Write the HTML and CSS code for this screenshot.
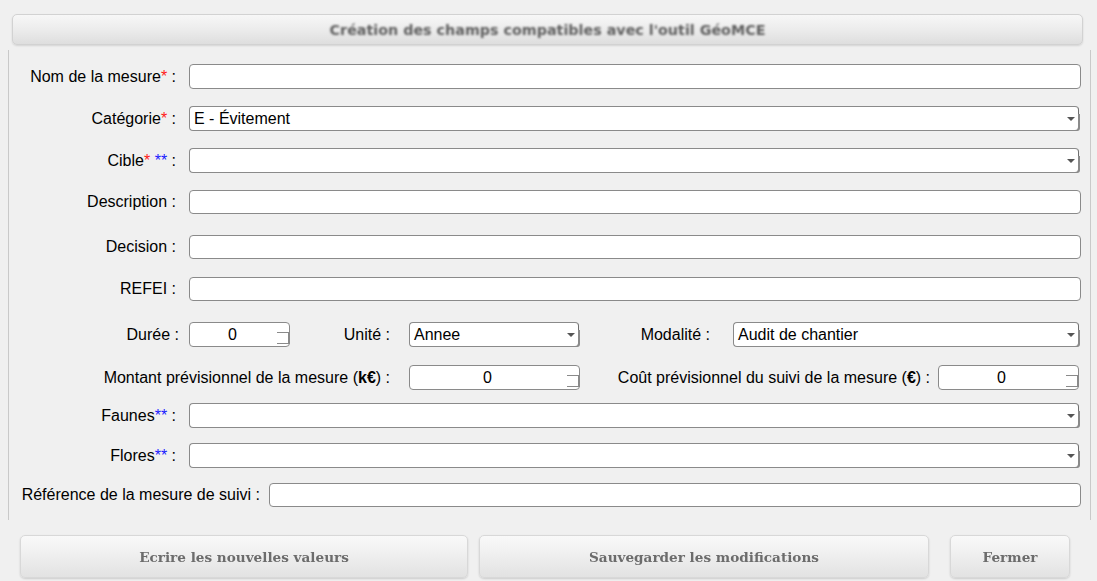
FILE: index.html
```html
<!DOCTYPE html>
<html lang="fr">
<head>
<meta charset="utf-8">
<title>GéoMCE</title>
<link rel="stylesheet" href="styles.css">
</head>
<body>
<div class="window">
  <div class="header">
    <div class="hbtn"><span>Création des champs compatibles avec l'outil GéoMCE</span></div>
  </div>
  <div class="panel">
    <div class="row r1">
      <label class="lbl w180 p13">Nom de la mesure<span class="req">*</span> :</label>
      <div class="field input"></div>
    </div>
    <div class="row r2">
      <label class="lbl w180 p13">Catégorie<span class="req">*</span> :</label>
      <div class="field combo"><span class="val">E - Évitement</span><span class="arrow"></span></div>
    </div>
    <div class="row r3">
      <label class="lbl w180 p13">Cible<span class="req">*</span> <span class="opt">**</span> :</label>
      <div class="field combo"><span class="val"></span><span class="arrow"></span></div>
    </div>
    <div class="row r4">
      <label class="lbl w180 p13">Description :</label>
      <div class="field input"></div>
    </div>
    <div class="row r5">
      <label class="lbl w180 p13">Decision :</label>
      <div class="field input"></div>
    </div>
    <div class="row r6">
      <label class="lbl w180 p13">REFEI :</label>
      <div class="field input"></div>
    </div>
    <div class="row r7">
      <label class="lbl w180 p11">Durée :</label>
      <div class="field spin s101"><span class="num">0</span><span class="steps"></span></div>
      <label class="lbl w119 p19">Unité :</label>
      <div class="field combo c170"><span class="val">Annee</span><span class="arrow"></span></div>
      <label class="lbl w154 p23">Modalité :</label>
      <div class="field combo grow"><span class="val">Audit de chantier</span><span class="arrow"></span></div>
    </div>
    <div class="row r8">
      <label class="lbl w400 p19">Montant prévisionnel de la mesure (<b>k€</b>) :</label>
      <div class="field spin s171"><span class="num">0</span><span class="steps"></span></div>
      <label class="lbl w358 p8">Coût prévisionnel du suivi de la mesure (<b>€</b>) :</label>
      <div class="field spin grow"><span class="num">0</span><span class="steps"></span></div>
    </div>
    <div class="row r9">
      <label class="lbl w180 p13">Faunes<span class="opt">**</span> :</label>
      <div class="field combo"><span class="val"></span><span class="arrow"></span></div>
    </div>
    <div class="row r10">
      <label class="lbl w180 p13">Flores<span class="opt">**</span> :</label>
      <div class="field combo"><span class="val"></span><span class="arrow"></span></div>
    </div>
    <div class="row r11">
      <label class="lbl w260 p9">Référence de la mesure de suivi :</label>
      <div class="field input"></div>
    </div>
  </div>
  <div class="footer">
    <div class="fbtn b1"><span>Ecrire les nouvelles valeurs</span></div>
    <div class="fbtn b2"><span>Sauvegarder les modifications</span></div>
    <div class="fbtn b3"><span>Fermer</span></div>
  </div>
</div>
</body>
</html>
```

FILE: styles.css
```css
* { box-sizing: border-box; }
html, body { margin: 0; padding: 0; }
body {
  background: #f0f0f0;
  font-family: "Liberation Sans", Arial, sans-serif;
  font-size: 16px;
  color: #000;
  width: 1097px;
  height: 581px;
  overflow: hidden;
}
.window { display: flex; flex-direction: column; height: 581px; }

.header { height: 50px; padding: 14px 14px 5px 12px; }
.hbtn {
  height: 31px;
  border: 1px solid #d2d2d2;
  border-radius: 5px;
  background: linear-gradient(#f7f7f7, #ececec 50%, #dedede);
  box-shadow: 0 1px 2px rgba(0,0,0,0.12);
  display: flex; align-items: center; justify-content: center;
}
.hbtn span {
  font-family: "DejaVu Sans", Verdana, sans-serif;
  font-weight: bold;
  font-size: 14.3px;
  color: #5e5e5e;
  filter: blur(0.8px);
}

.panel {
  margin-left: 8px;
  width: 1083px;
  height: 470px;
  border-left: 1px solid #c9c9c9;
  border-right: 1px solid #c9c9c9;
  padding: 14px 9px 0 0;
  display: grid;
  grid-template-rows: 42px 42px 42px 45px 42px 45px 43px 38px 40px 40px 25px;
}
.row { display: flex; align-items: center; height: 25px; }
.r4, .r5, .r6, .r11 { height: 24px; }

.lbl {
  flex: none;
  text-align: right;
  white-space: nowrap;
  line-height: 20px;
}
.lbl b { font-weight: bold; }
.req { color: #ff1a1a; }
.opt { color: #1a1aff; }
.w180 { width: 180px; }
.w119 { width: 119px; }
.w154 { width: 154px; }
.w400 { width: 400px; }
.w358 { width: 358px; }
.w260 { width: 260px; }
.p8 { padding-right: 8px; }
.p9 { padding-right: 9px; }
.p11 { padding-right: 10px; }
.p13 { padding-right: 13px; }
.p19 { padding-right: 19px; }
.p23 { padding-right: 23px; }

.field {
  position: relative;
  flex: 1;
  height: 100%;
  background: #fff;
  border: 1px solid #8a8a8a;
  border-radius: 4px;
  display: flex; align-items: center;
}
.combo { margin-right: 2px; border-right-color: #6e6e6e; }
.combo .val { padding-left: 4px; line-height: 20px; }
.combo .arrow {
  position: absolute;
  right: 3px; top: 50%;
  margin-top: -2px;
  width: 0; height: 0;
  border-left: 4px solid transparent;
  border-right: 4px solid transparent;
  border-top: 4px solid #555;
}
.combo::after {
  content: "";
  position: absolute;
  right: -2px; bottom: -1px;
  width: 14px; height: 16px;
  border-right: 2px solid #8a8a8a;
  border-bottom: 1px solid #8a8a8a;
  border-bottom-right-radius: 3px;
}
.grow { flex: 1; margin-right: 2px; }
.s101 { flex: none; width: 101px; }
.s171 { flex: none; width: 171px; }
.c170 { flex: none; width: 170px; margin-right: 0; }
.spin .num { flex: 1; text-align: center; padding-right: 14px; line-height: 20px; }
.spin .steps {
  position: absolute;
  right: -1px; top: 9px;
  width: 13px; height: 12px;
  border-top: 1px solid #8a8a8a;
  border-bottom: 1px solid #8a8a8a;
  border-right: 2px solid #8a8a8a;
}

.footer {
  display: flex;
  padding: 15px 0 0 20px;
}
.fbtn {
  height: 43px;
  border: 1px solid #d8d8d8;
  border-radius: 5px;
  background: linear-gradient(#f9f9f9, #eeeeee 50%, #e2e2e2);
  box-shadow: 0 1px 2px rgba(0,0,0,0.15);
  display: flex; align-items: center; justify-content: center;
  filter: blur(0.3px);
}
.fbtn span {
  font-family: "DejaVu Serif", "Liberation Serif", serif;
  font-weight: bold;
  font-size: 13.6px;
  color: #6c6c6c;
  filter: blur(0.7px);
}
.b1 { width: 448px; margin-right: 11px; }
.b2 { width: 450px; margin-right: 21px; }
.b3 { width: 120px; }
```
